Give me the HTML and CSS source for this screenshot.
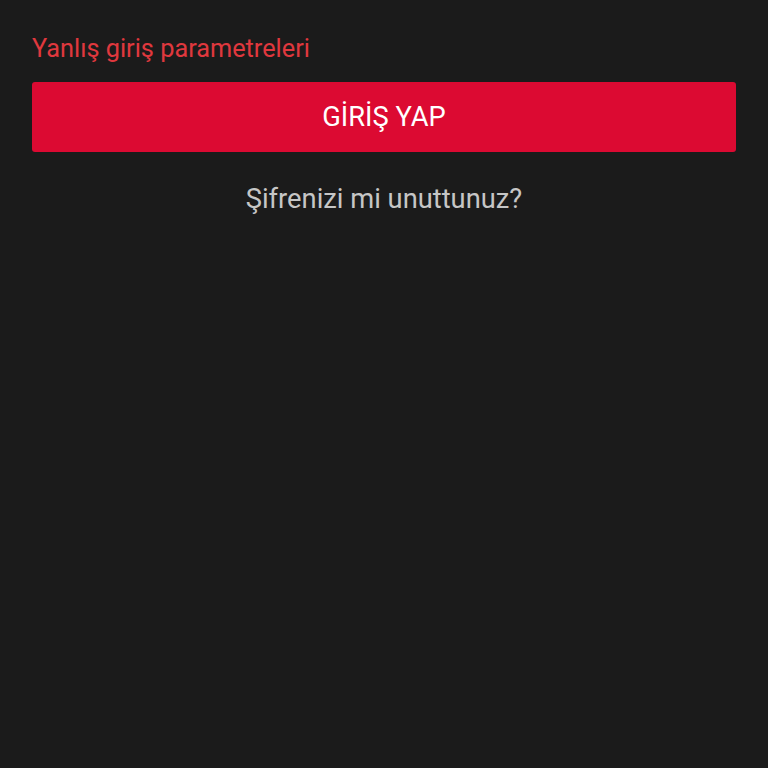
FILE: index.html
```html
<!DOCTYPE html>
<html lang="tr">
<head>
    <meta charset="UTF-8">
    <meta name="viewport" content="width=device-width, initial-scale=1.0">
    <title>Giriş</title>
    <link rel="stylesheet" href="styles.css">
</head>
<body>
    <div class="container">
        <p class="error">Yanlış giriş parametreleri</p>
        <button class="login">GİRİŞ YAP</button>
        <a class="forgot" href="#">Şifrenizi mi unuttunuz?</a>
    </div>
</body>
</html>
```

FILE: styles.css
```css
/* page */
body{
  margin: 0;
  background-color: #1b1b1b;
  font-family: Roboto, "Noto Sans", sans-serif;
  height: 768px;
}
.container{
  display: flex;
  flex-direction: column;
  padding: 34px 32px 0 32px;
}
/* error */
.error{
  margin: 0;
  color: #e0383e;
  font-size: 25.3px;
  line-height: 30px;
}
/* button */
.login{
  margin-top: 18px;
  height: 70px;
  padding: 0 0 1px 0;
  border: none;
  border-radius: 3px;
  background-color: #dc0a32;
  color: #ffffff;
  font-family: Roboto, "Noto Sans", sans-serif;
  font-size: 27.3px;
  cursor: pointer;
}
/* forgot */
.forgot{
  margin-top: 31px;
  align-self: center;
  color: #c6c6c6;
  text-decoration: none;
  font-size: 27.3px;
  line-height: 32px;
}
```
